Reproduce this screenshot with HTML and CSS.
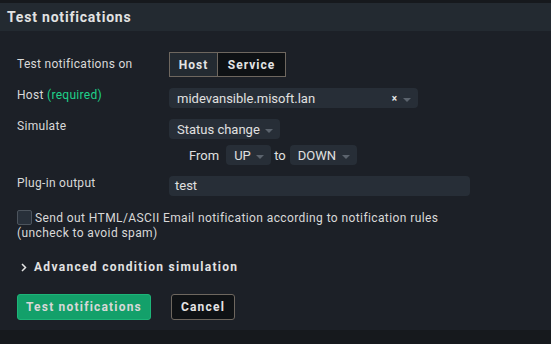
FILE: index.html
```html
<!DOCTYPE html>
<html>
<head>
<meta charset="utf-8">
<link rel="stylesheet" href="styles.css">
</head>
<body>
<div class="page">
  <div class="header"><h1 class="title">Test notifications</h1></div>
  <div class="content">
    <div class="row row-toggle">
      <div class="label label-toggle">Test notifications on</div>
      <div class="field">
        <div class="toggle">
          <span class="tbtn tbtn-host">Host</span><span class="tbtn tbtn-service">Service</span>
        </div>
      </div>
    </div>
    <div class="row">
      <div class="label">Host <span class="req">(required)</span></div>
      <div class="field">
        <div class="select select-host"><span class="sel-text">midevansible.misoft.lan</span><span class="sel-x">×</span><span class="arrow"></span></div>
      </div>
    </div>
    <div class="row">
      <div class="label">Simulate</div>
      <div class="field">
        <div class="select select-status"><span class="sel-text">Status change</span><span class="arrow"></span></div>
        <div class="fromto">
          <span class="ft-word">From</span>
          <div class="select select-up"><span class="sel-text">UP</span><span class="arrow"></span></div>
          <span class="ft-word ft-to">to</span>
          <div class="select select-down"><span class="sel-text">DOWN</span><span class="arrow"></span></div>
        </div>
      </div>
    </div>
    <div class="row">
      <div class="label">Plug-in output</div>
      <div class="field"><div class="input">test</div></div>
    </div>
    <div class="check-row"><span class="checkbox"></span>Send out HTML/ASCII Email notification according to notification rules (uncheck to avoid spam)</div>
    <div class="advanced"><svg class="chev" width="6" height="9" viewBox="0 0 6 9"><path d="M1 1 L4.5 4.5 L1 8" fill="none" stroke="#e4e4e4" stroke-width="1.5"/></svg><span>Advanced condition simulation</span></div>
    <div class="buttons">
      <span class="btn btn-primary">Test notifications</span>
      <span class="btn btn-cancel">Cancel</span>
    </div>
  </div>
</div>
</body>
</html>
```
FILE: styles.css
```css
html, body {
  margin: 0;
  padding: 0;
  background: #16191d;
}
body {
  font-family: Roboto, "Liberation Sans", sans-serif;
  font-size: 12px;
  color: #d9d9d9;
  width: 551px;
  height: 344px;
  overflow: hidden;
}
.page {
  padding-top: 3px;
}
.header {
  background: #232a31;
  height: 28px;
  display: flex;
  align-items: center;
  padding-left: 7px;
}
.title {
  margin: 0;
  font-size: 14px;
  font-weight: bold;
  letter-spacing: 0.8px;
  color: #e2e2e2;
}
.content {
  background: #1c2027;
  padding: 21px 0 10px 17px;
  height: 299px;
  box-sizing: border-box;
}
.row {
  display: grid;
  grid-template-columns: 152px 1fr;
  margin-bottom: 11px;
}
.label {
  line-height: 14px;
  letter-spacing: 0.3px;
}
.label-toggle {
  padding-top: 5px;
}
.req {
  color: #1fd18a;
}
.toggle {
  display: inline-flex;
  border: 1px solid #6e675f;
  height: 23px;
}
.tbtn {
  display: flex;
  align-items: center;
  justify-content: center;
  font-weight: bold;
  letter-spacing: 1px;
  color: #e4e4e4;
}
.tbtn-host {
  width: 47px;
  background: #232a31;
  border-right: 1px solid #6e675f;
}
.tbtn-service {
  width: 67px;
  background: #0e1114;
}
.select {
  display: flex;
  align-items: center;
  background: #272e37;
  border-radius: 4px;
  height: 20px;
  box-sizing: border-box;
  padding-left: 8px;
  font-size: 13px;
  color: #e0e0e0;
  letter-spacing: 0;
}
.sel-text {
  flex: 1;
}
.sel-x {
  font-size: 10px;
  font-weight: bold;
  color: #e8e8e8;
  margin-right: 6px;
}
.arrow {
  width: 0;
  height: 0;
  border-left: 4px solid transparent;
  border-right: 4px solid transparent;
  border-top: 4px solid #5b636d;
  margin-right: 7px;
  margin-top: 4px;
}
.select-host {
  width: 249px;
}
.select-status {
  width: 111px;
}
.fromto {
  display: flex;
  align-items: center;
  margin-top: 6px;
  padding-left: 20px;
}
.ft-word {
  font-size: 13px;
  color: #e0e0e0;
  margin-right: 7px;
}
.ft-to {
  margin-left: 3px;
  margin-right: 4px;
}
.select-up {
  width: 45px;
}
.select-down {
  width: 67px;
}
.input {
  width: 301px;
  height: 20px;
  box-sizing: border-box;
  background: #272e37;
  border-radius: 4px;
  padding-left: 6px;
  font-size: 13px;
  line-height: 20px;
  color: #e0e0e0;
}
.check-row {
  margin-top: 14px;
  line-height: 15px;
  width: 450px;
  letter-spacing: 0.4px;
}
.checkbox {
  display: inline-block;
  width: 13px;
  height: 13px;
  border: 1px solid #4c545d;
  background: #28303a;
  border-radius: 2px;
  vertical-align: -3px;
  margin-right: 3px;
}
.advanced {
  display: flex;
  align-items: center;
  margin-top: 19px;
  padding-left: 4px;
  font-weight: bold;
  letter-spacing: 1.3px;
  color: #e2e2e2;
}
.chev {
  margin-right: 7px;
}
.buttons {
  display: flex;
  gap: 20px;
  margin-top: 20px;
}
.btn {
  display: flex;
  align-items: center;
  justify-content: center;
  height: 26px;
  box-sizing: border-box;
  border-radius: 3px;
  font-weight: bold;
  letter-spacing: 1.2px;
}
.btn-primary {
  width: 134px;
  background: #13a06a;
  border: 1px solid #1db478;
  color: #d8d8d8;
}
.btn-cancel {
  width: 64px;
  background: #0f1215;
  border: 1px solid #6e675f;
  color: #e4e4e4;
}
```
